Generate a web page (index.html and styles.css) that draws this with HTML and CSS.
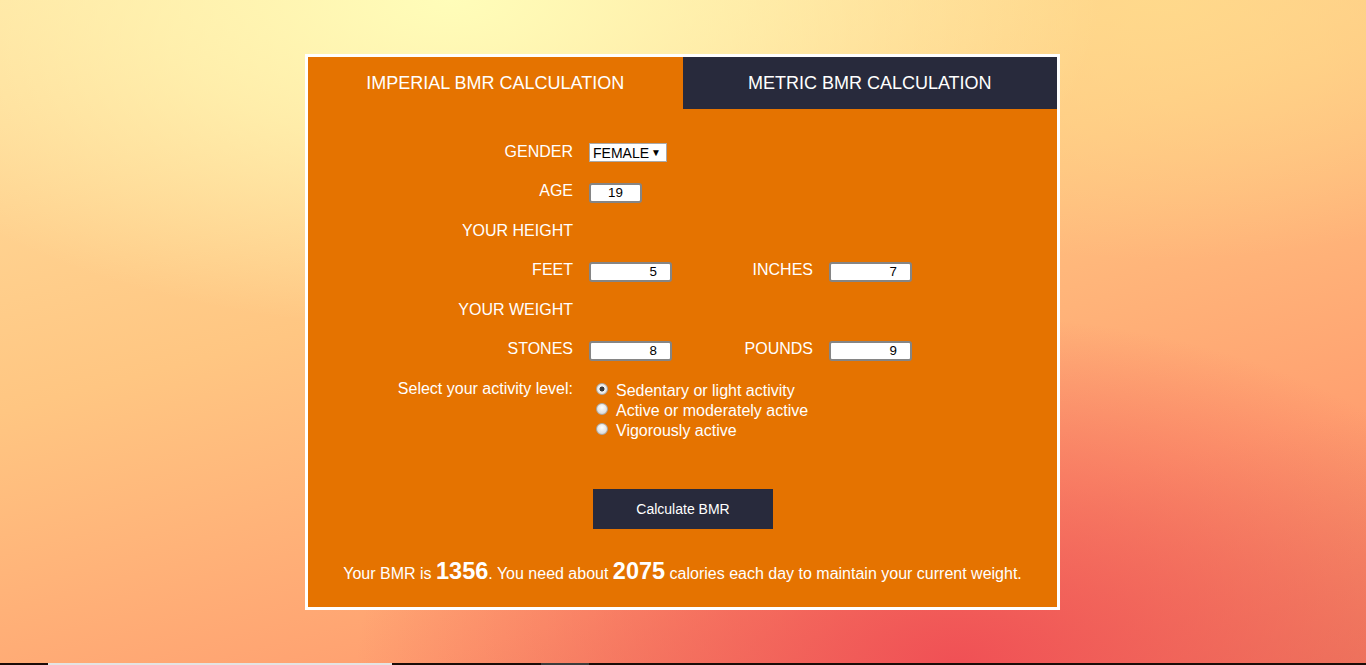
FILE: index.html
```html
<!DOCTYPE html>
<html lang="en">
<head>
<meta charset="utf-8">
<title>BMR Calculator</title>
<link rel="stylesheet" href="styles.css">
</head>
<body>
<div class="calc">
  <div class="tabs">
    <div class="tab tab-active">IMPERIAL BMR CALCULATION</div>
    <div class="tab tab-dark">METRIC BMR CALCULATION</div>
  </div>
  <form class="form">
    <div class="row">
      <label class="label">GENDER</label>
      <span class="select-wrap">
        <select class="select"><option>FEMALE</option><option>MALE</option></select>
        <span class="select-arrow">▼</span>
      </span>
    </div>
    <div class="row">
      <label class="label">AGE</label>
      <input class="num num-age" type="text" value="19">
    </div>
    <div class="row">
      <span class="label">YOUR HEIGHT</span>
    </div>
    <div class="row">
      <label class="label">FEET</label>
      <input class="num" type="text" value="5">
      <label class="label label-2">INCHES</label>
      <input class="num" type="text" value="7">
    </div>
    <div class="row">
      <span class="label">YOUR WEIGHT</span>
    </div>
    <div class="row">
      <label class="label">STONES</label>
      <input class="num" type="text" value="8">
      <label class="label label-2">POUNDS</label>
      <input class="num" type="text" value="9">
    </div>
    <div class="activity">
      <span class="label label-act">Select your activity level:</span>
      <div class="options">
        <label class="option"><input class="radio" type="radio" name="act" checked> Sedentary or light activity</label>
        <label class="option"><input class="radio" type="radio" name="act"> Active or moderately active</label>
        <label class="option"><input class="radio" type="radio" name="act"> Vigorously active</label>
      </div>
    </div>
    <div class="actions">
      <button class="btn" type="button">Calculate BMR</button>
    </div>
    <p class="result">Your BMR is <strong class="big">1356</strong>. You need about <strong class="big">2075</strong> calories each day to maintain your current weight.</p>
  </form>
</div>
<div class="taskbar">
  <span class="seg seg-dark1"></span>
  <span class="seg seg-light"></span>
  <span class="seg seg-dark2"></span>
  <span class="seg seg-grey"></span>
  <span class="seg seg-dark3"></span>
</div>
</body>
</html>
```
FILE: styles.css
```css
html, body {
  margin: 0;
  padding: 0;
}
body {
  min-height: 665px;
  padding-right: 1px;
  font-family: "Liberation Sans", Arial, sans-serif;
  color: #fff;
  background:
    radial-gradient(ellipse 650px 330px at 33% 0%, rgba(255, 253, 185, 1) 0%, rgba(255, 253, 185, 0.6) 45%, rgba(255, 253, 185, 0) 100%),
    radial-gradient(ellipse 500px 260px at 85% 0%, rgba(255, 220, 140, 0.8) 0%, rgba(255, 220, 140, 0) 100%),
    radial-gradient(ellipse 600px 350px at 70% 100%, rgba(240, 80, 85, 1) 0%, rgba(240, 85, 85, 0.55) 50%, rgba(240, 85, 85, 0) 100%),
    linear-gradient(165deg, #ffe0a0 0%, #ffc682 40%, #ffa070 75%, #ec8060 100%);
  overflow: hidden;
}
.calc {
  width: 749px;
  margin: 54px auto 0;
  border: 3px solid #fff;
  background: #e57300;
}
.tabs {
  display: flex;
}
.tab {
  flex: 1;
  height: 52px;
  display: flex;
  align-items: center;
  justify-content: center;
  font-size: 18px;
}
.tab-dark {
  background: #282a3c;
}
.form {
  margin: 0;
  padding: 23px 0 0;
}
.row {
  display: flex;
  align-items: center;
  height: 39.5px;
}
.label {
  width: 265px;
  text-align: right;
  font-size: 16px;
  margin-right: 16px;
  flex: none;
}
.label-2 {
  width: 141px;
}
.select-wrap {
  position: relative;
  display: inline-block;
  margin-top: 2px;
}
.select {
  appearance: none;
  -webkit-appearance: none;
  width: 78px;
  height: 19px;
  border: 1px solid #a9a9a9;
  border-radius: 0;
  background: #fff;
  font-family: "Liberation Sans", Arial, sans-serif;
  font-size: 14px;
  color: #000;
  padding: 0 0 0 3px;
  margin: 0;
  display: block;
}
.select-arrow {
  position: absolute;
  right: 6px;
  top: 4px;
  font-size: 10px;
  color: #000;
  pointer-events: none;
}
.num {
  box-sizing: border-box;
  width: 83px;
  height: 20px;
  margin: 3px 0 0;
  border: 2px solid #858585;
  border-radius: 3px;
  background: #fff;
  font-family: "Liberation Sans", Arial, sans-serif;
  font-size: 13.33px;
  color: #000;
  text-align: right;
  padding: 0 13px 0 0;
  flex: none;
}
.num-age {
  width: 53px;
  text-align: center;
  padding: 0;
}
.activity {
  display: flex;
  align-items: flex-start;
  padding-top: 10px;
}
.label-act {
  margin-right: 22px;
  line-height: 20px;
}
.options {
  display: flex;
  flex-direction: column;
  margin-top: 2px;
}
.option {
  display: flex;
  align-items: center;
  font-size: 16px;
  line-height: 20px;
  height: 20px;
}
.radio {
  appearance: none;
  -webkit-appearance: none;
  width: 12px;
  height: 12px;
  margin: 0 8px 0 1px;
  border: 1px solid #a8a8a8;
  border-radius: 50%;
  background: radial-gradient(circle at 50% 35%, #ffffff 0%, #dedede 70%, #c8c8c8 100%);
  box-sizing: border-box;
  position: relative;
  top: -2px;
}
.radio:checked {
  background: radial-gradient(circle, #3a3a3a 0 2.2px, #f4f4f4 2.8px, #d9d9d9 100%);
}
.actions {
  padding: 48px 0 0 285px;
}
.btn {
  width: 180px;
  height: 40px;
  border: 0;
  background: #282a3c;
  color: #fff;
  font-family: "Liberation Sans", Arial, sans-serif;
  font-size: 14px;
  cursor: pointer;
}
.result {
  margin: 0;
  padding: 27px 0 18px;
  text-align: center;
  font-size: 16px;
  line-height: 30px;
}
.big {
  font-size: 23.5px;
}
.taskbar {
  position: fixed;
  left: 0;
  right: 0;
  bottom: 0;
  height: 2px;
  display: flex;
  background: #1b0c08;
}
.seg {
  display: block;
  height: 2px;
}
.seg-dark1 { width: 48px; }
.seg-light { width: 344px; background: #e4e4e4; }
.seg-dark2 { width: 149px; }
.seg-grey { width: 48px; background: #3c3c3c; }
```
